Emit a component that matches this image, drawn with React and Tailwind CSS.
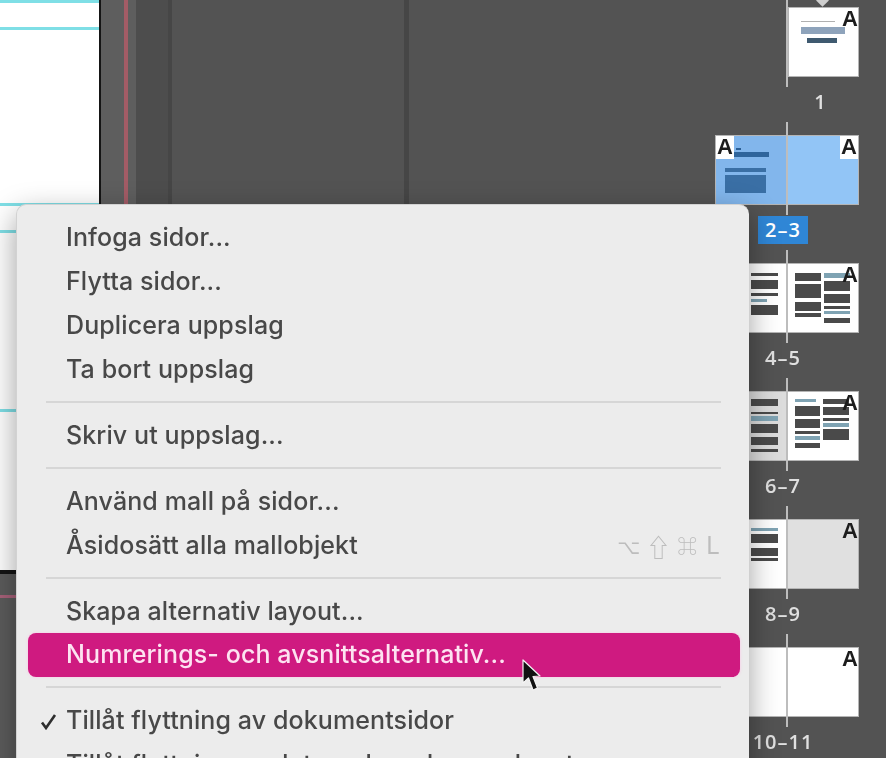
const BAR = "bg-[#4a4a4a]";
const TEAL = "bg-[#7fa3b3]";

function Bars({ items, className }) {
  return (
    <div className={"flex flex-col " + className}>
      {items.map((c, i) => (
        <div key={i} className={c} />
      ))}
    </div>
  );
}

function MasterA({ left, boxed }) {
  return (
    <span
      className={
        "absolute top-0 text-[22px] leading-[22px] font-bold text-[#1c1c1c] [font-family:'Liberation_Sans',sans-serif] " +
        (left ? "left-0 " : "right-0 ") +
        (boxed ? "bg-white px-[1px] pb-[1px]" : "")
      }
    >
      A
    </span>
  );
}

function Spine({ h = "h-[93px]" }) {
  return <div className={"absolute left-[71px] top-0 w-[2px] bg-[#bdbdbd] z-10 " + h} />;
}

function Label({ children, active, wide }) {
  return (
    <div className={"flex justify-center mt-[11px] h-[28px] " + (wide ? "w-[211px]" : "w-[136px]")}>
      <span
        className={
          "h-[28px] leading-[28px] text-[20px] font-semibold tracking-[1px] [font-family:'Open_Sans',sans-serif] text-center " +
          (active ? "w-[50px] bg-[#2f86d6] text-white" : "text-[#e0e0e0]")
        }
      >
        {children}
      </span>
    </div>
  );
}

function Item({ children, label, active, wide }) {
  return (
    <div className="relative h-[128px] shrink-0">
      <Spine />
      <div className="flex h-[70px] mt-[13px] w-[144px] relative">{children}</div>
      <Label active={active} wide={wide}>{label}</Label>
    </div>
  );
}

function Page({ className, children }) {
  return <div className={"relative w-[72px] h-full border border-[#b5b5b5] " + className}>{children}</div>;
}

export default function App() {
  const rows = ["Infoga sidor...", "Flytta sidor...", "Duplicera uppslag", "Ta bort uppslag"];
  return (
    <div className="w-[886px] h-[758px] overflow-hidden bg-[#535353]">
      <div className="relative flex w-[886px] h-[758px] blur-[0.7px]">
        {/* document page */}
        <div className="w-[99px] shrink-0 flex flex-col">
          <div className="h-[570px] bg-white flex flex-col">
            <div className="h-[3px] bg-[#7fdfe6]" />
            <div className="h-[3px] mt-[24px] bg-[#7fdfe6]" />
            <div className="h-[3px] mt-[173px] bg-[#7fdfe6]" />
            <div className="h-[3px] mt-[24px] bg-[#7fdfe6]" />
            <div className="h-[3px] mt-[176px] bg-[#7fdfe6]" />
          </div>
          <div className="h-[4px] bg-[#151515]" />
          <div className="flex-1 bg-[#5c5c5c]">
            <div className="h-[3px] mt-[21px] bg-[#a8627a]" />
          </div>
        </div>
        <div className="w-[2px] shrink-0 h-[572px] bg-[#151515]" />
        <div className="w-[35px] shrink-0 bg-[#5e5e5e] flex pl-[23px]">
          <div className="w-[4px] h-full bg-[#a35c66]" />
        </div>
        <div className="w-[32px] shrink-0 bg-[#4d4d4d]" />
        <div className="w-[4px] shrink-0 bg-[#464646]" />
        <div className="w-[232px] shrink-0 bg-[#535353]" />
        <div className="w-[5px] shrink-0 bg-[#464646]" />

        {/* page thumbnails */}
        <div className="flex-1 flex justify-end pr-[27px]">
          <div className="w-[144px] flex flex-col mt-[-6px]">
            <Item label="1" wide>
              <div className="w-[72px] shrink-0" />
              <Page className="ml-[1px] bg-white">
                <MasterA />
                <Bars
                  className="px-[12px] pt-[13px]"
                  items={[
                    "h-[1px] w-[34px] bg-[#b0b0b0]",
                    "h-[7px] mt-[5px] w-[44px] bg-[#8ea3bb]",
                    "h-[5px] mt-[4px] ml-[6px] w-[30px] bg-[#3f5a70]",
                  ]}
                />
                <div className="absolute left-[29px] -top-[12px] w-[9px] h-[9px] rotate-45 bg-[#cfcfcf]" />
              </Page>
            </Item>

            <Item label="2–3" active>
              <Page className="bg-[#82b6ec] border-[#6f93b8]">
                <MasterA left boxed />
                <Bars
                  className="pl-[9px] pr-[4px] pt-[12px]"
                  items={[
                    "h-[2px] ml-[11px] w-[5px] bg-[#2a5f96]",
                    "h-[5px] mt-[2px] w-[44px] bg-[#2f659c]",
                    "h-[4px] mt-[11px] w-[41px] bg-[#3a6fa5]",
                    "h-[18px] mt-[3px] w-[41px] bg-[#3a6fa5]",
                  ]}
                />
              </Page>
              <Page className="bg-[#92c5f6] border-[#6f93b8]">
                <MasterA boxed />
              </Page>
            </Item>

            <Item label="4–5">
              <Page className="bg-white">
                <Bars
                  className="pl-[35px] pr-[8px] pt-[9px]"
                  items={[
                    `h-[3px] ${BAR}`,
                    `h-[9px] mt-[4px] ${BAR}`,
                    `h-[3px] mt-[4px] ${BAR}`,
                    `h-[3px] mt-[3px] w-[16px] ${TEAL}`,
                    `h-[10px] mt-[3px] ${BAR}`,
                  ]}
                />
              </Page>
              <Page className="bg-white">
                <MasterA />
                <div className="flex gap-[3px] pl-[7px] pt-[9px]">
                  <Bars
                    className="w-[26px]"
                    items={[`h-[8px] ${BAR}`, `h-[14px] mt-[3px] ${BAR}`, `h-[9px] mt-[4px] ${BAR}`, `h-[4px] mt-[2px] ${BAR}`]}
                  />
                  <Bars
                    className="w-[26px]"
                    items={[
                      `h-[5px] ${TEAL}`,
                      `h-[10px] mt-[3px] ${BAR}`,
                      `h-[9px] mt-[3px] ${BAR}`,
                      `h-[3px] mt-[3px] ${BAR}`,
                      `h-[3px] mt-[2px] ${TEAL}`,
                      `h-[5px] mt-[4px] ${BAR}`,
                    ]}
                  />
                </div>
              </Page>
            </Item>

            <Item label="6–7">
              <Page className="bg-[#dcdcdc]">
                <Bars
                  className="pl-[35px] pr-[8px] pt-[7px]"
                  items={[
                    `h-[7px] ${BAR}`,
                    `h-[2px] mt-[6px] ${BAR}`,
                    `h-[5px] mt-[2px] ${TEAL}`,
                    `h-[9px] mt-[3px] ${BAR}`,
                    `h-[8px] mt-[4px] ${BAR}`,
                    `h-[3px] mt-[4px] ${BAR}`,
                  ]}
                />
              </Page>
              <Page className="bg-white">
                <MasterA />
                <div className="flex gap-[3px] pl-[7px] pt-[7px]">
                  <Bars
                    className="w-[25px]"
                    items={[
                      `h-[3px] w-[21px] ${TEAL}`,
                      `h-[10px] mt-[4px] ${BAR}`,
                      `h-[9px] mt-[3px] ${BAR}`,
                      `h-[3px] mt-[3px] ${BAR}`,
                      `h-[4px] mt-[2px] ${TEAL}`,
                      `h-[5px] mt-[3px] ${BAR}`,
                    ]}
                  />
                  <Bars
                    className="w-[26px]"
                    items={[
                      `h-[5px] ${BAR}`,
                      `h-[8px] mt-[3px] ${BAR}`,
                      `h-[3px] mt-[3px] ${BAR}`,
                      `h-[4px] mt-[2px] ${TEAL}`,
                      `h-[11px] mt-[2px] ${BAR}`,
                    ]}
                  />
                </div>
              </Page>
            </Item>

            <Item label="8–9">
              <Page className="bg-white">
                <Bars
                  className="pl-[35px] pr-[8px] pt-[8px]"
                  items={[
                    `h-[3px] ${TEAL}`,
                    `h-[9px] mt-[3px] ${BAR}`,
                    `h-[8px] mt-[5px] ${BAR}`,
                    `h-[3px] mt-[2px] ${BAR}`,
                  ]}
                />
              </Page>
              <Page className="bg-[#e0e0e0]">
                <MasterA />
              </Page>
            </Item>

            <Item label="10–11">
              <Page className="bg-white" />
              <Page className="bg-white">
                <MasterA />
              </Page>
            </Item>
          </div>
        </div>

        {/* context menu */}
        <div className="absolute left-[16px] top-[204px] w-[733px] h-[600px] rounded-[10px] border-l border-t border-[#d2d2d2] bg-[#ececec] shadow-[0_10px_30px_rgba(0,0,0,0.38)] pt-[11px] text-[#484848] text-[25px] font-medium tracking-[0.1px] [font-family:Inter,sans-serif]">
          {rows.map((t) => (
            <MenuRow key={t}>{t}</MenuRow>
          ))}
          <Sep />
          <MenuRow>Skriv ut uppslag...</MenuRow>
          <Sep />
          <MenuRow>Använd mall på sidor...</MenuRow>
          <MenuRow
            right={
              <span className="flex items-center gap-[6px] text-[#bdbdbd] text-[20px] leading-[28px] font-normal [font-family:'Noto_Sans_CJK_JP','DejaVu_Sans',sans-serif]">
                <span>⌥</span>
                <span className="text-[25px]">⇧</span>
                <span>⌘</span>
                <span className="text-[24px] ml-[3px] [font-family:Inter,sans-serif]">L</span>
              </span>
            }
          >
            Åsidosätt alla mallobjekt
          </MenuRow>
          <Sep />
          <MenuRow className="h-[43px]">Skapa alternativ layout...</MenuRow>
          <div className="relative ml-[11px] mr-[9px] h-[44px] rounded-[8px] bg-[#cf1a80] shadow-[0_0_3px_rgba(255,190,230,0.9)] flex items-center pl-[38px] text-[#fde3f1]">
            Numrerings- och avsnittsalternativ...
            <svg className="absolute left-[494px] top-[26px]" width="20" height="36" viewBox="0 0 20 36">
              <path
                d="M1 1 L1 24 L6.5 19 L11 31 L15.5 29 L11 17.5 L18 17 Z"
                fill="#111"
                stroke="#f4f4f4"
                strokeWidth="1.2"
                strokeLinejoin="round"
              />
            </svg>
          </div>
          <Sep />
          <MenuRow check>Tillåt flyttning av dokumentsidor</MenuRow>
          <MenuRow check>Tillåt flyttning av det markerade uppslaget</MenuRow>
        </div>
      </div>
    </div>
  );
}

function Sep() {
  return <div className="h-[2px] ml-[29px] mr-[28px] mt-[9px] mb-[11px] bg-[#d6d6d6]" />;
}

function MenuRow({ children, className = "h-[44px]", right, check }) {
  return (
    <div className={"flex items-center ml-[11px] mr-[29px] " + className}>
      <span className="w-[38px] shrink-0 pl-[12px] flex items-center">
        {check && (
          <svg width="17" height="17" viewBox="0 0 17 17">
            <path d="M2 9.5 L6 15 L15 2" fill="none" stroke="#2e2e2e" strokeWidth="2.6" />
          </svg>
        )}
      </span>
      <span className="flex-1 whitespace-nowrap">{children}</span>
      {right}
    </div>
  );
}
